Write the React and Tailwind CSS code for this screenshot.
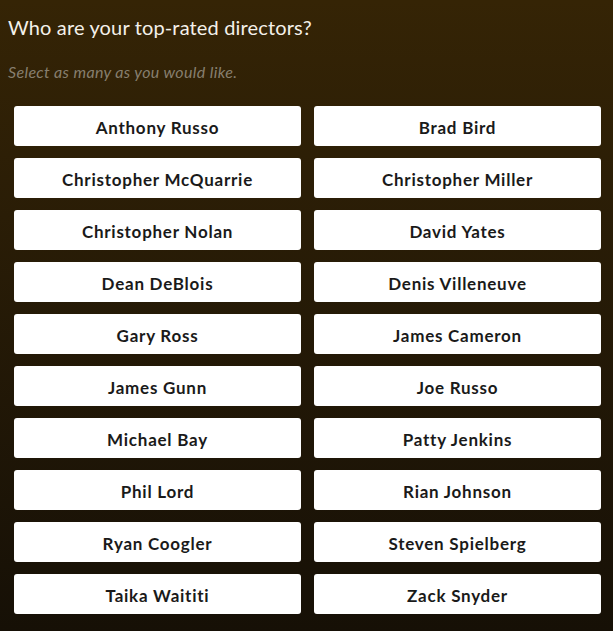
const directors = [
  "Anthony Russo",
  "Brad Bird",
  "Christopher McQuarrie",
  "Christopher Miller",
  "Christopher Nolan",
  "David Yates",
  "Dean DeBlois",
  "Denis Villeneuve",
  "Gary Ross",
  "James Cameron",
  "James Gunn",
  "Joe Russo",
  "Michael Bay",
  "Patty Jenkins",
  "Phil Lord",
  "Rian Johnson",
  "Ryan Coogler",
  "Steven Spielberg",
  "Taika Waititi",
  "Zack Snyder",
];

export default function App() {
  return (
    <div
      className="min-h-[631px] w-full bg-gradient-to-b from-[#352405] to-[#161006]"
      style={{ fontFamily: "Lato, 'Noto Sans', sans-serif" }}
    >
      <div className="px-2 pt-[14px]">
        <h2 className="text-[20px] leading-[26px] tracking-[0.15px] text-[#f4f1ea]">
          Who are your top-rated directors?
        </h2>
        <p className="mt-[22px] text-[16px] leading-[20px] italic tracking-[0.35px] text-[#877f6f]">
          Select as many as you would like.
        </p>
      </div>

      <div className="grid grid-cols-2 gap-x-[13px] gap-y-3 pl-[14px] pr-3 pt-[24px] pb-4">
        {directors.map((name) => (
          <button
            key={name}
            type="button"
            className="h-10 rounded-[3px] bg-white pt-[3px] text-[17px] font-bold tracking-[0.75px] text-[#1a1a1a]"
          >
            {name}
          </button>
        ))}
      </div>
    </div>
  );
}
